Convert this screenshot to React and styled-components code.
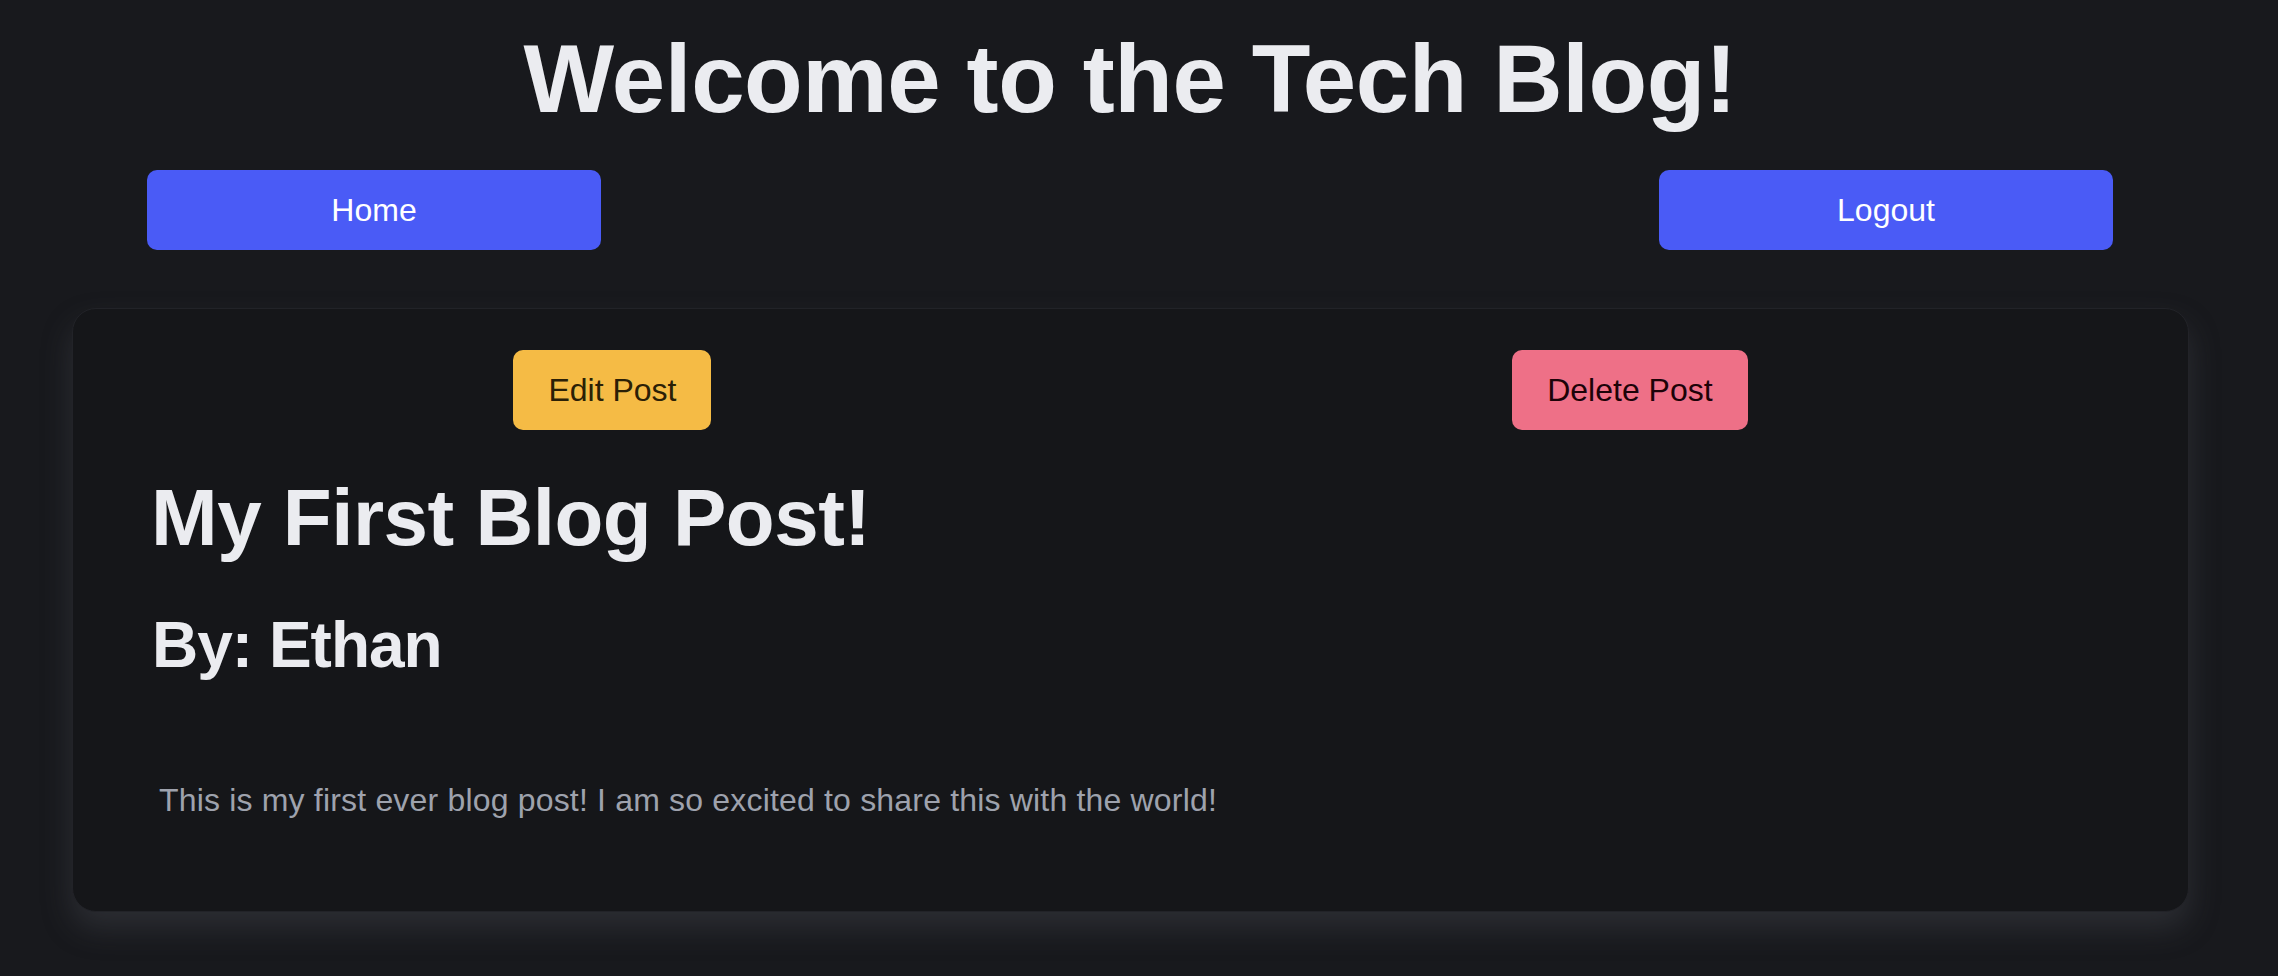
import React from "react";
import styled, { createGlobalStyle } from "styled-components";

const GlobalStyle = createGlobalStyle`
  html, body {
    margin: 0;
    padding: 0;
    background: #18191d;
  }
  body {
    font-family: "Liberation Sans", Arial, Helvetica, sans-serif;
    color: #ebecf0;
    min-height: 976px;
  }
  * { box-sizing: border-box; }
`;

const Page = styled.div`
  width: calc(100% - 18px);
  display: flex;
  flex-direction: column;
`;

const Title = styled.h1`
  margin: 24px 0 0;
  font-size: 96px;
  line-height: 110px;
  font-weight: 700;
  letter-spacing: -0.4px;
  text-align: center;
  color: #ebecf0;
`;

const Nav = styled.nav`
  display: flex;
  justify-content: space-between;
  padding: 0 147px;
  margin-top: 36px;
`;

const Button = styled.button`
  height: 80px;
  border: none;
  border-radius: 10px;
  font-family: inherit;
  font-size: 32px;
  font-weight: 400;
  display: flex;
  align-items: center;
  justify-content: center;
  cursor: pointer;
  background: ${(p) => p.$bg};
  color: ${(p) => p.$fg};
  width: ${(p) => p.$width || "auto"};
  padding: ${(p) => (p.$width ? "0" : "0 35px")};
`;

const Card = styled.article`
  margin: 58px 71px 64px 72px;
  background: #151619;
  border: 1px solid #222328;
  border-radius: 24px;
  padding: 41px 40px 92px;
  box-shadow: 0 16px 30px rgba(72, 74, 82, 0.42);
`;

const Actions = styled.div`
  display: flex;
  justify-content: space-around;
`;

const PostTitle = styled.h2`
  margin: 42px 0 0 38px;
  font-size: 80px;
  line-height: 92px;
  font-weight: 700;
  letter-spacing: -0.5px;
  color: #ebecf0;
`;

const Author = styled.h3`
  margin: 44px 0 0 39px;
  font-size: 64px;
  line-height: 74px;
  font-weight: 700;
  letter-spacing: -1px;
  color: #ebecf0;
`;

const Body = styled.p`
  margin: 100px 0 0 46px;
  font-size: 32px;
  line-height: 37px;
  letter-spacing: 0.18px;
  color: #9ea2ad;
`;

export default function App() {
  return (
    <>
      <GlobalStyle />
      <Page>
        <Title>Welcome to the Tech Blog!</Title>
        <Nav>
          <Button $bg="#4a5bf6" $fg="#ffffff" $width="454px">Home</Button>
          <Button $bg="#4a5bf6" $fg="#ffffff" $width="454px">Logout</Button>
        </Nav>
        <Card>
          <Actions>
            <Button $bg="#f5bb45" $fg="#2b2006">Edit Post</Button>
            <Button $bg="#ee7087" $fg="#1c0208">Delete Post</Button>
          </Actions>
          <PostTitle>My First Blog Post!</PostTitle>
          <Author>By: Ethan</Author>
          <Body>
            This is my first ever blog post! I am so excited to share this with the world!
          </Body>
        </Card>
      </Page>
    </>
  );
}
